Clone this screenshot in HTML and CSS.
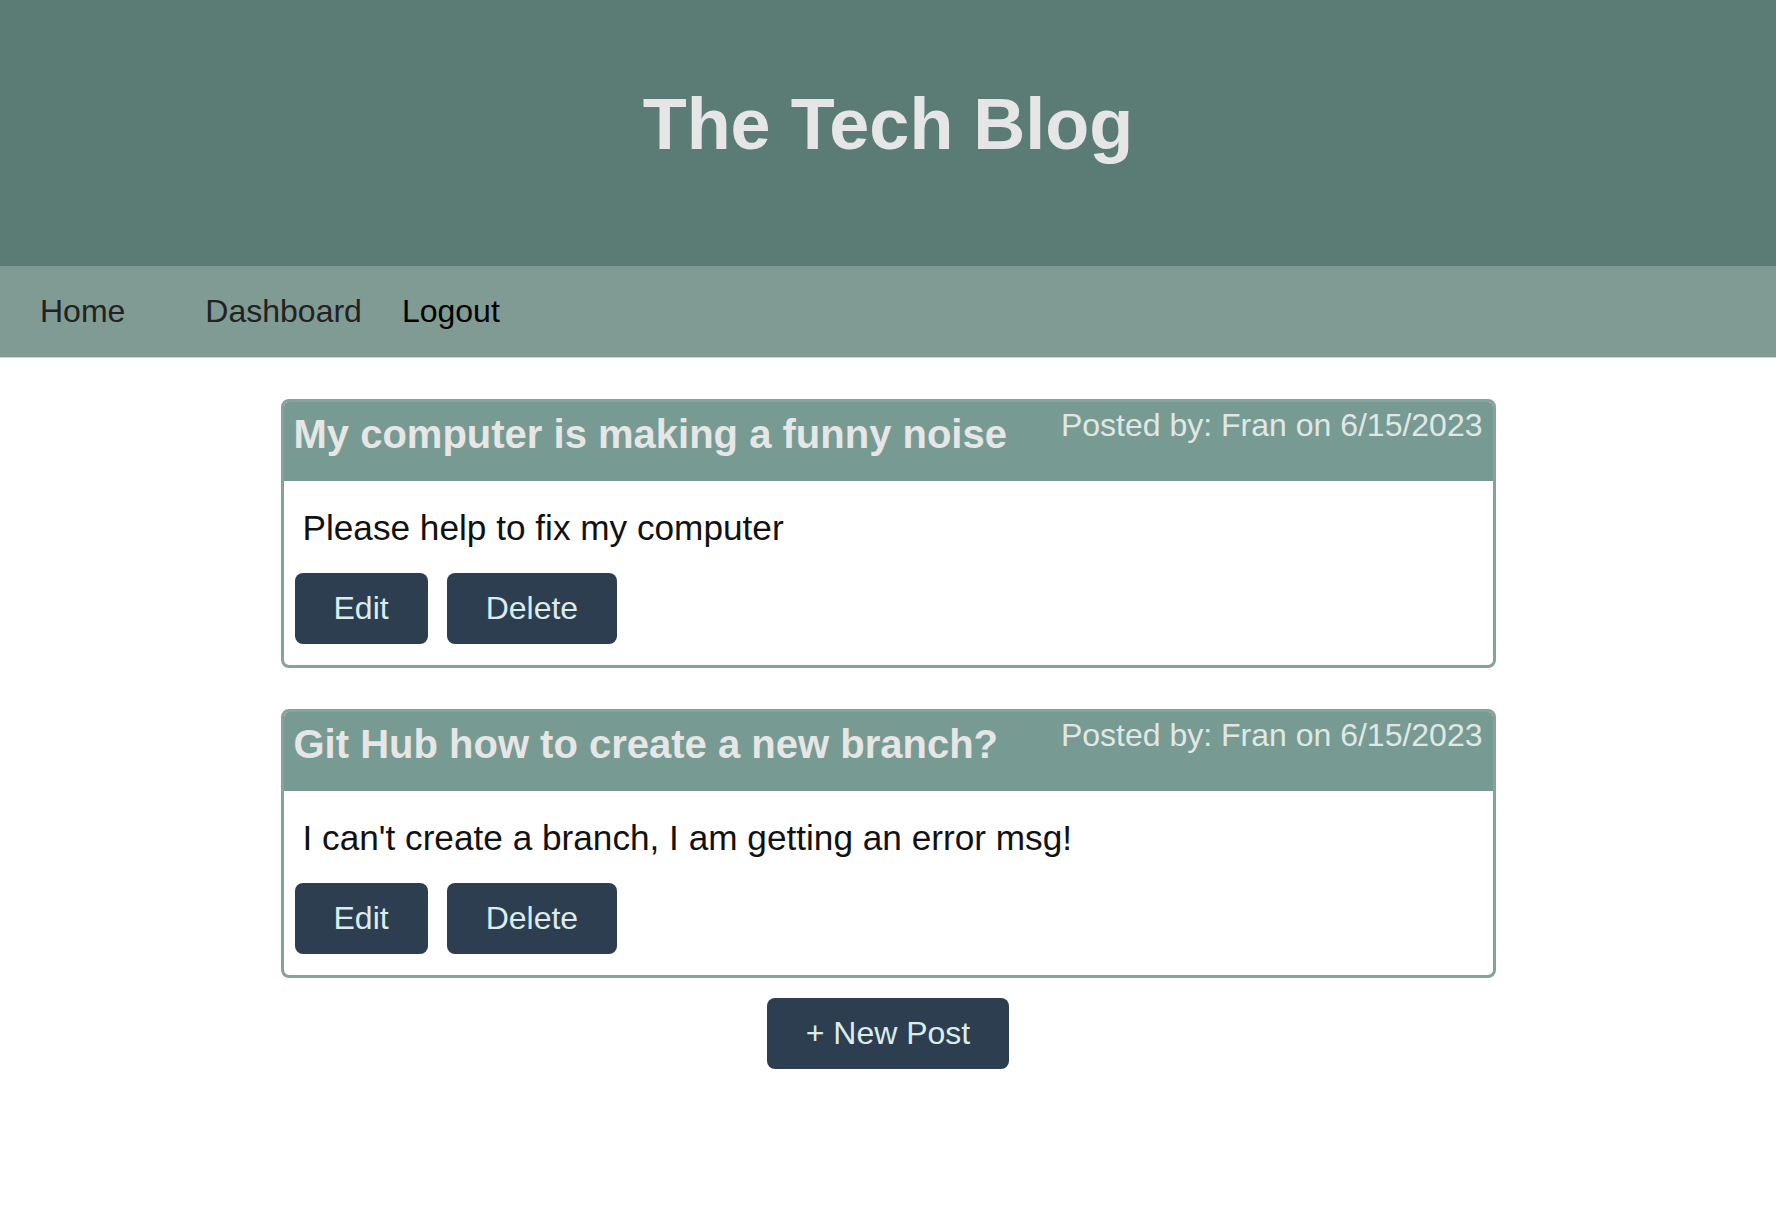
FILE: index.html
```html
<!DOCTYPE html>
<html lang="en">
<head>
<meta charset="utf-8">
<title>The Tech Blog</title>
<link rel="stylesheet" href="styles.css">
</head>
<body>
<header class="site-header">
  <h1 class="site-title">The Tech Blog</h1>
</header>
<nav class="site-nav">
  <a class="nav-link nav-home" href="#">Home</a>
  <a class="nav-link nav-dash" href="#">Dashboard</a>
  <a class="nav-link nav-logout" href="#">Logout</a>
</nav>
<main class="content">
  <article class="post">
    <div class="post-head">
      <h2 class="post-title">My computer is making a funny noise</h2>
      <span class="post-meta">Posted by: Fran on 6/15/2023</span>
    </div>
    <div class="post-body">
      <p class="post-text">Please help to fix my computer</p>
      <div class="post-actions">
        <button class="btn">Edit</button>
        <button class="btn">Delete</button>
      </div>
    </div>
  </article>
  <article class="post">
    <div class="post-head">
      <h2 class="post-title">Git Hub how to create a new branch?</h2>
      <span class="post-meta">Posted by: Fran on 6/15/2023</span>
    </div>
    <div class="post-body">
      <p class="post-text">I can't create a branch, I am getting an error msg!</p>
      <div class="post-actions">
        <button class="btn">Edit</button>
        <button class="btn">Delete</button>
      </div>
    </div>
  </article>
  <div class="new-post-row">
    <button class="btn">+ New Post</button>
  </div>
</main>
</body>
</html>
```
FILE: styles.css
```css
* { box-sizing: border-box; }
html, body {
  margin: 0;
  padding: 0;
  background: #ffffff;
  font-family: "Liberation Sans", Arial, Helvetica, sans-serif;
}
.site-header {
  background: #5b7c74;
  padding: 83px 0 100px;
  text-align: center;
}
.site-title {
  margin: 0;
  font-size: 72px;
  line-height: 83px;
  font-weight: bold;
  color: #e6e6e6;
}
.site-nav {
  background: #809b93;
  padding: 27px 0 27px 40px;
  display: flex;
  align-items: center;
  border-bottom: 1px solid #d3d8d6;
}
.nav-link {
  font-size: 32px;
  line-height: 37px;
  text-decoration: none;
  color: #222222;
}
.nav-home { margin-right: 80px; }
.nav-dash { margin-right: 40px; }
.nav-logout { color: #000000; }
.content {
  padding-top: 41px;
}
.post {
  width: 1215px;
  margin: 0 auto 41px;
  border: 3px solid #87a29b;
  border-radius: 8px;
  overflow: hidden;
}
.post-head {
  background: #779a92;
  display: flex;
  justify-content: space-between;
  align-items: flex-start;
  padding: 5px 10px 24px;
}
.post-title {
  margin: 4px 0 0;
  font-size: 40px;
  line-height: 46px;
  font-weight: bold;
  color: #e6e6e6;
}
.post-meta {
  font-size: 32px;
  line-height: 37px;
  color: #e0e8e5;
}
.post-body {
  padding: 0 11px 21px;
}
.post-text {
  margin: 27px 0 25px 8px;
  font-size: 35.2px;
  line-height: 40px;
  color: #111111;
}
.post-actions {
  display: flex;
  gap: 19px;
}
.btn {
  font-family: "Liberation Sans", Arial, Helvetica, sans-serif;
  font-size: 32px;
  line-height: 37px;
  padding: 17px 39px;
  background: #2d3e50;
  color: #dcecec;
  border: none;
  border-radius: 8px;
  cursor: pointer;
}
.new-post-row {
  display: flex;
  justify-content: center;
  margin-top: -21px;
}
```
